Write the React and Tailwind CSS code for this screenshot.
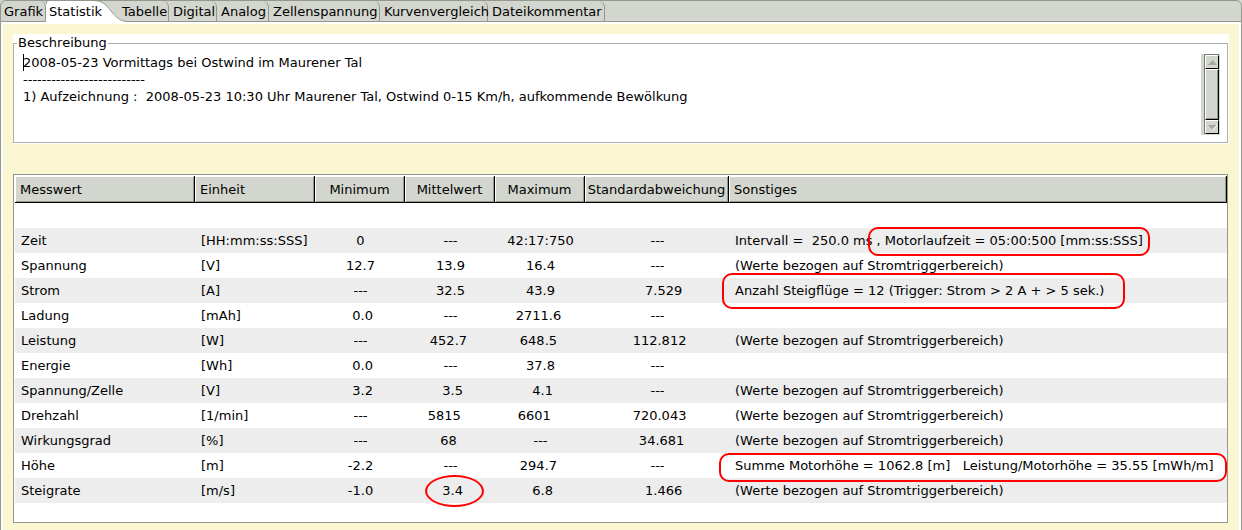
const TABS = [
  { label: "Grafik", width: "w-[46px]" },
  { label: "Statistik", width: "w-[72px]", active: true },
  { label: "Tabelle", width: "w-[51px]" },
  { label: "Digital", width: "w-[48px]" },
  { label: "Analog", width: "w-[52px]" },
  { label: "Zellenspannung", width: "w-[111px]" },
  { label: "Kurvenvergleich", width: "w-[108px]" },
  { label: "Dateikommentar", width: "w-[117px]" },
];

const COLUMNS = [
  { label: "Messwert", width: "w-[180px]" },
  { label: "Einheit", width: "w-[120px]" },
  { label: "Minimum", width: "w-[90px]", center: true },
  { label: "Mittelwert", width: "w-[90px]", center: true },
  { label: "Maximum", width: "w-[90px]", center: true },
  { label: "Standardabweichung", width: "w-[144px]", center: true },
  { label: "Sonstiges", width: "w-auto" },
];

const TRIGGER = "(Werte bezogen auf Stromtriggerbereich)";

const ROWS = [
  ["Zeit", "[HH:mm:ss:SSS]", "0", "---", "42:17:750", "---", "Intervall =  250.0 ms , Motorlaufzeit = 05:00:500 [mm:ss:SSS]"],
  ["Spannung", "[V]", "12.7", "13.9", "16.4", "---", TRIGGER],
  ["Strom", "[A]", "---", "32.5", "43.9", "   7.529", "Anzahl Steigflüge = 12 (Trigger: Strom > 2 A + > 5 sek.)"],
  ["Ladung", "[mAh]", " 0.0", "---", "2711.6 ", "---", ""],
  ["Leistung", "[W]", "---", "452.7 ", "648.5 ", " 112.812", TRIGGER],
  ["Energie", "[Wh]", " 0.0", "---", "37.8", "---", ""],
  ["Spannung/Zelle", "[V]", " 3.2", " 3.5", " 4.1", "---", TRIGGER],
  ["Drehzahl", "[1/min]", "---", "5815   ", "6601   ", " 720.043", TRIGGER],
  ["Wirkungsgrad", "[%]", "---", "68 ", "---", "  34.681", TRIGGER],
  ["Höhe", "[m]", "-2.2", "---", "294.7 ", "---", "Summe Motorhöhe = 1062.8 [m]   Leistung/Motorhöhe = 35.55 [mWh/m]"],
  ["Steigrate", "[m/s]", "-1.0", " 3.4", " 6.8", "   1.466", TRIGGER],
];

const MARKS = {
  "Zeit-6": "left-[139px] -top-px h-[29px] w-[282px] rounded-[10px]",
  "Strom-6": "-left-[7px] -top-[5px] h-9 w-[403px] rounded-[10px]",
  "Höhe-6": "-left-[10px] top-0 h-[29px] w-[508px] rounded-[10px]",
  "Steigrate-3": "left-5 -top-[3px] h-8 w-[59px] rounded-[50%]",
};

const DESCRIPTION = `2008-05-23 Vormittags bei Ostwind im Maurener Tal
--------------------------
1) Aufzeichnung :  2008-05-23 10:30 Uhr Maurener Tal, Ostwind 0-15 Km/h, aufkommende Bewölkung`;

function TabBar() {
  return (
    <div role="tablist" className="flex h-[22px] rounded-t-md border border-[#94988c] bg-[#d3d6ce]">
      {TABS.map((tab, i) => (
        <button
          key={tab.label}
          type="button"
          role="tab"
          aria-selected={Boolean(tab.active)}
          className={`relative shrink-0 whitespace-nowrap pt-px text-left leading-5 ${i === 0 ? "-ml-px" : ""} ${tab.width} ${
            tab.active ? "pl-[3px]" : "rounded-tr-md border-r border-[#94988c] pl-1"
          }`}
        >
          {tab.active && (
            <svg className="absolute left-0 -top-px" width="82" height="22" viewBox="0 0 82 22" aria-hidden="true">
              <path d="M0 22V4Q0 1 3 1H48C57 1 60 5 65 11S74 21.500 82 21.500V22Z" fill="#fff" />
              <path d="M0 4Q0 .5 3 .5H48C57 .5 60 5 65 11S74 21.500 82 21.500" fill="none" stroke="#94988c" />
            </svg>
          )}
          <span className="relative">{tab.label}</span>
        </button>
      ))}
    </div>
  );
}

function ScrollBar() {
  const raised = "border-t border-l border-r border-b border-t-white border-l-white border-r-black border-b-black bg-[#d3d6ce]";
  return (
    <div className="flex h-[81px] w-[19px] shrink-0 bg-[#d3d6ce] pb-px pl-[3px] pr-px">
      <div className="flex w-full flex-col border-t border-l border-[#777a72]">
        <button type="button" aria-label="Nach oben" className={`flex h-[14px] items-center justify-center ${raised}`}>
          <svg width="9" height="5" viewBox="0 0 9 5"><path d="M4.500 0L9 5H0Z" fill="#a6a99f" /></svg>
        </button>
        <div className={`flex-1 shadow-[inset_-1px_-1px_0_#94988c] ${raised}`} />
        <button type="button" aria-label="Nach unten" className={`flex h-[14px] items-center justify-center ${raised}`}>
          <svg width="9" height="5" viewBox="0 0 9 5"><path d="M0 0H9L4.500 5Z" fill="#a6a99f" /><path d="M9 0L4.500 5" stroke="#fff" /></svg>
        </button>
      </div>
    </div>
  );
}

function Description() {
  return (
    <div className="-mr-px bg-white pb-px pr-px">
      <fieldset className="min-w-0 border border-[#acafac] pb-[7px] pl-[9px] pr-[7px]">
        <legend className="-ml-[6px] px-px leading-[18px]">
          <label htmlFor="beschreibung">Beschreibung</label>
        </legend>
        <div className="relative flex items-start pt-[2px]">
          <span className="absolute left-0 top-[2px] h-[17px] w-px bg-black" />
          <textarea
            id="beschreibung"
            defaultValue={DESCRIPTION}
            className="h-[81px] min-w-0 flex-1 resize-none overflow-hidden bg-transparent leading-[17px] outline-none"
          />
          <ScrollBar />
        </div>
      </fieldset>
    </div>
  );
}

function Statistics() {
  return (
    <div className="mt-[30px] border border-[#94988c] bg-white pb-[19px] pl-px pt-px">
      <table className="w-full table-fixed border-separate border-spacing-0">
        <thead>
          <tr className="h-[27px]">
            {COLUMNS.map((col) => (
              <th
                key={col.label}
                className={`whitespace-nowrap border-b border-r border-black bg-[#d3d6ce] px-0 pb-0 pt-[2px] font-normal leading-6 shadow-[inset_1px_1px_0_#fff,inset_-1px_-1px_0_#94988c] ${col.width} ${
                  col.center ? "text-center" : "pl-[5px] text-left"
                }`}
              >
                {col.label}
              </th>
            ))}
          </tr>
        </thead>
        <tbody>
          <tr className="h-[25px]">
            <td colSpan={7} className="p-0" />
          </tr>
          {ROWS.map((row) => (
            <tr key={row[0]} className="h-[25px] odd:bg-white even:bg-[#ededed]">
              {row.map((value, i) => {
                const mark = MARKS[`${row[0]}-${i}`];
                return (
                  <td
                    key={i}
                    className={`relative whitespace-pre p-0 leading-[25px] ${
                      COLUMNS[i].center ? "pl-px text-center" : "pl-[6px]"
                    }`}
                  >
                    {value}
                    {mark && <span className={`pointer-events-none absolute z-10 border-2 border-[#ff0000] ${mark}`} />}
                  </td>
                );
              })}
            </tr>
          ))}
        </tbody>
      </table>
    </div>
  );
}

export default function App() {
  return (
    <div className="min-h-screen bg-[#d3d6ce] font-['DejaVu_Sans',sans-serif] text-[13px] text-black">
      <div className="flex min-h-screen flex-col">
        <TabBar />
        <main className="flex flex-1 flex-col border-x border-[#94988c] bg-white px-[2px] pt-[2px]">
          <div className="flex-1 bg-[#fbf7d3] pb-[7px] pl-[10px] pr-[11px] pt-[10px]">
            <Description />
            <Statistics />
          </div>
        </main>
      </div>
    </div>
  );
}
